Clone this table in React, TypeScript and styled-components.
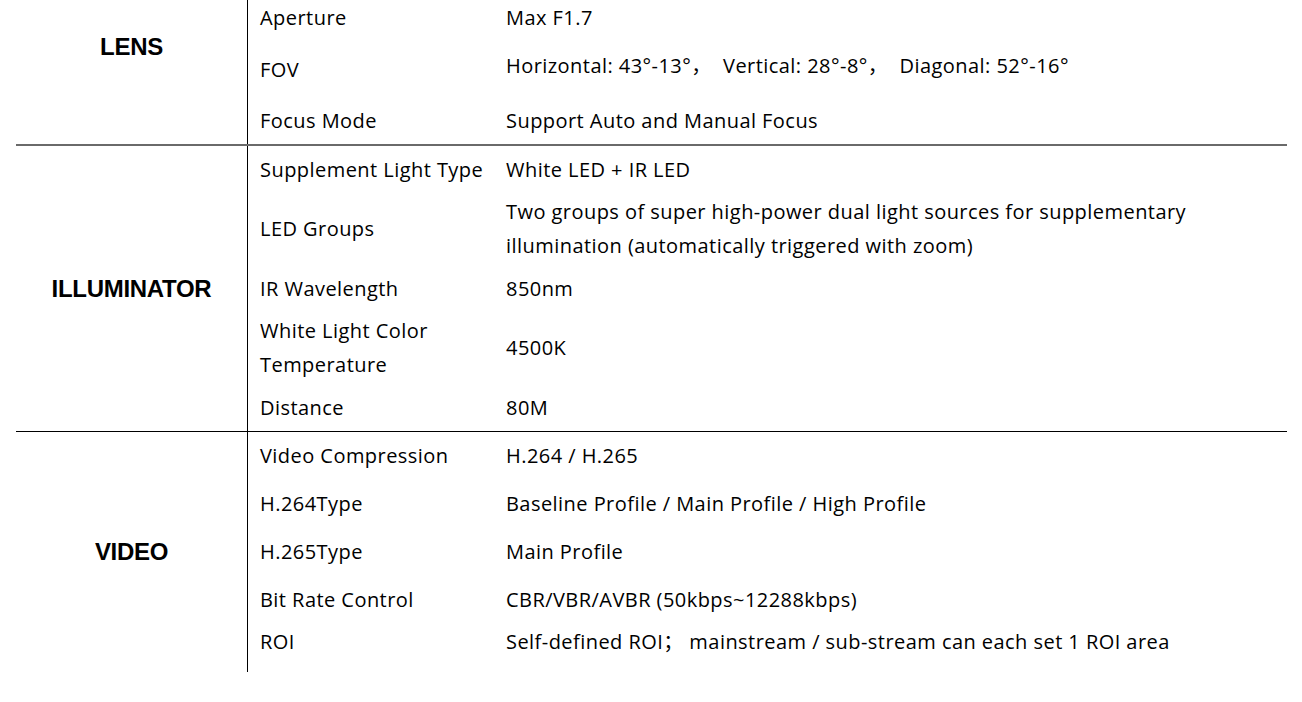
import React from 'react';
import styled, { createGlobalStyle } from 'styled-components';

type SpecRow = {
    label: React.ReactNode
    value: React.ReactNode
    h: number
    pb?: number
    lift?: number
}

type SpecGroup = {
    title: string
    titlePb?: number
    border?: 'gray' | 'black'
    rows: SpecRow[]
}

const GlobalStyle = createGlobalStyle`
  html, body {
    margin: 0;
    padding: 0;
    background: #fff;
  }

  body {
    font-family: "Open Sans", "Noto Sans CJK SC", sans-serif;
    color: #000;
  }
`

const SpecTable = styled.div`
  margin-left: 16px;
  width: 1271px;
  display: flex;
  flex-direction: column;
`

const Section = styled.section<{ $border?: 'gray' | 'black' }>`
  display: grid;
  grid-template-columns: 232px 1fr;
  border-bottom: ${p => p.$border === 'gray' ? '2px solid #6a6a6a' : p.$border === 'black' ? '1px solid #000' : 'none'};
`

const SectionTitle = styled.div<{ $pb?: number }>`
  display: flex;
  align-items: center;
  justify-content: center;
  border-right: 1px solid #000;
  padding-bottom: ${p => p.$pb || 0}px;
  font-family: "Liberation Sans", Arial, sans-serif;
  font-size: 24px;
  font-weight: 700;
  letter-spacing: -0.3px;
`

const RowList = styled.div`
  display: flex;
  flex-direction: column;
`

const Row = styled.div<{ $h: number, $pb?: number }>`
  display: grid;
  grid-template-columns: 246px 1fr;
  align-items: center;
  height: ${p => p.$h}px;
  padding-left: 12px;
  padding-bottom: ${p => p.$pb || 0}px;
  box-sizing: border-box;
  font-size: 20px;
  line-height: 34px;
  letter-spacing: 0.45px;
`

const Label = styled.div`
  white-space: nowrap;
`

const Value = styled.div<{ $lift?: number }>`
  white-space: pre;
  margin-bottom: ${p => p.$lift || 0}px;
`

const groups: SpecGroup[] = [
    {
        title: 'LENS',
        titlePb: 50,
        border: 'gray',
        rows: [
            {label: 'Aperture', value: 'Max F1.7', h: 36},
            {label: 'FOV', value: 'Horizontal: 43°-13°，  Vertical: 28°-8°，  Diagonal: 52°-16°', h: 68, lift: 9},
            {label: 'Focus Mode', value: 'Support Auto and Manual Focus', h: 40, pb: 8},
        ],
    },
    {
        title: 'ILLUMINATOR',
        border: 'black',
        rows: [
            {label: 'Supplement Light Type', value: 'White LED + IR LED', h: 47},
            {
                label: 'LED Groups',
                value: <>Two groups of super high-power dual light sources for supplementary<br/>illumination (automatically triggered with zoom)</>,
                h: 72
            },
            {label: 'IR Wavelength', value: '850nm', h: 47},
            {label: <>White Light Color<br/>Temperature</>, value: '4500K', h: 72},
            {label: 'Distance', value: '80M', h: 47},
        ],
    },
    {
        title: 'VIDEO',
        rows: [
            {label: 'Video Compression', value: 'H.264 / H.265', h: 48},
            {label: 'H.264Type', value: 'Baseline Profile / Main Profile / High Profile', h: 48},
            {label: 'H.265Type', value: 'Main Profile', h: 48},
            {label: 'Bit Rate Control', value: 'CBR/VBR/AVBR (50kbps~12288kbps)', h: 48},
            {label: 'ROI', value: 'Self-defined ROI； mainstream / sub-stream can each set 1 ROI area', h: 48, pb: 12},
        ],
    },
]

const App = () => {
    return (
        <>
            <GlobalStyle/>
            <SpecTable>
                {groups.map(g => (
                    <Section key={g.title} $border={g.border}>
                        <SectionTitle $pb={g.titlePb}>{g.title}</SectionTitle>
                        <RowList>
                            {g.rows.map((r, i) => (
                                <Row key={i} $h={r.h} $pb={r.pb}>
                                    <Label>{r.label}</Label>
                                    <Value $lift={r.lift}>{r.value}</Value>
                                </Row>
                            ))}
                        </RowList>
                    </Section>
                ))}
            </SpecTable>
        </>
    );
};

export default App;
